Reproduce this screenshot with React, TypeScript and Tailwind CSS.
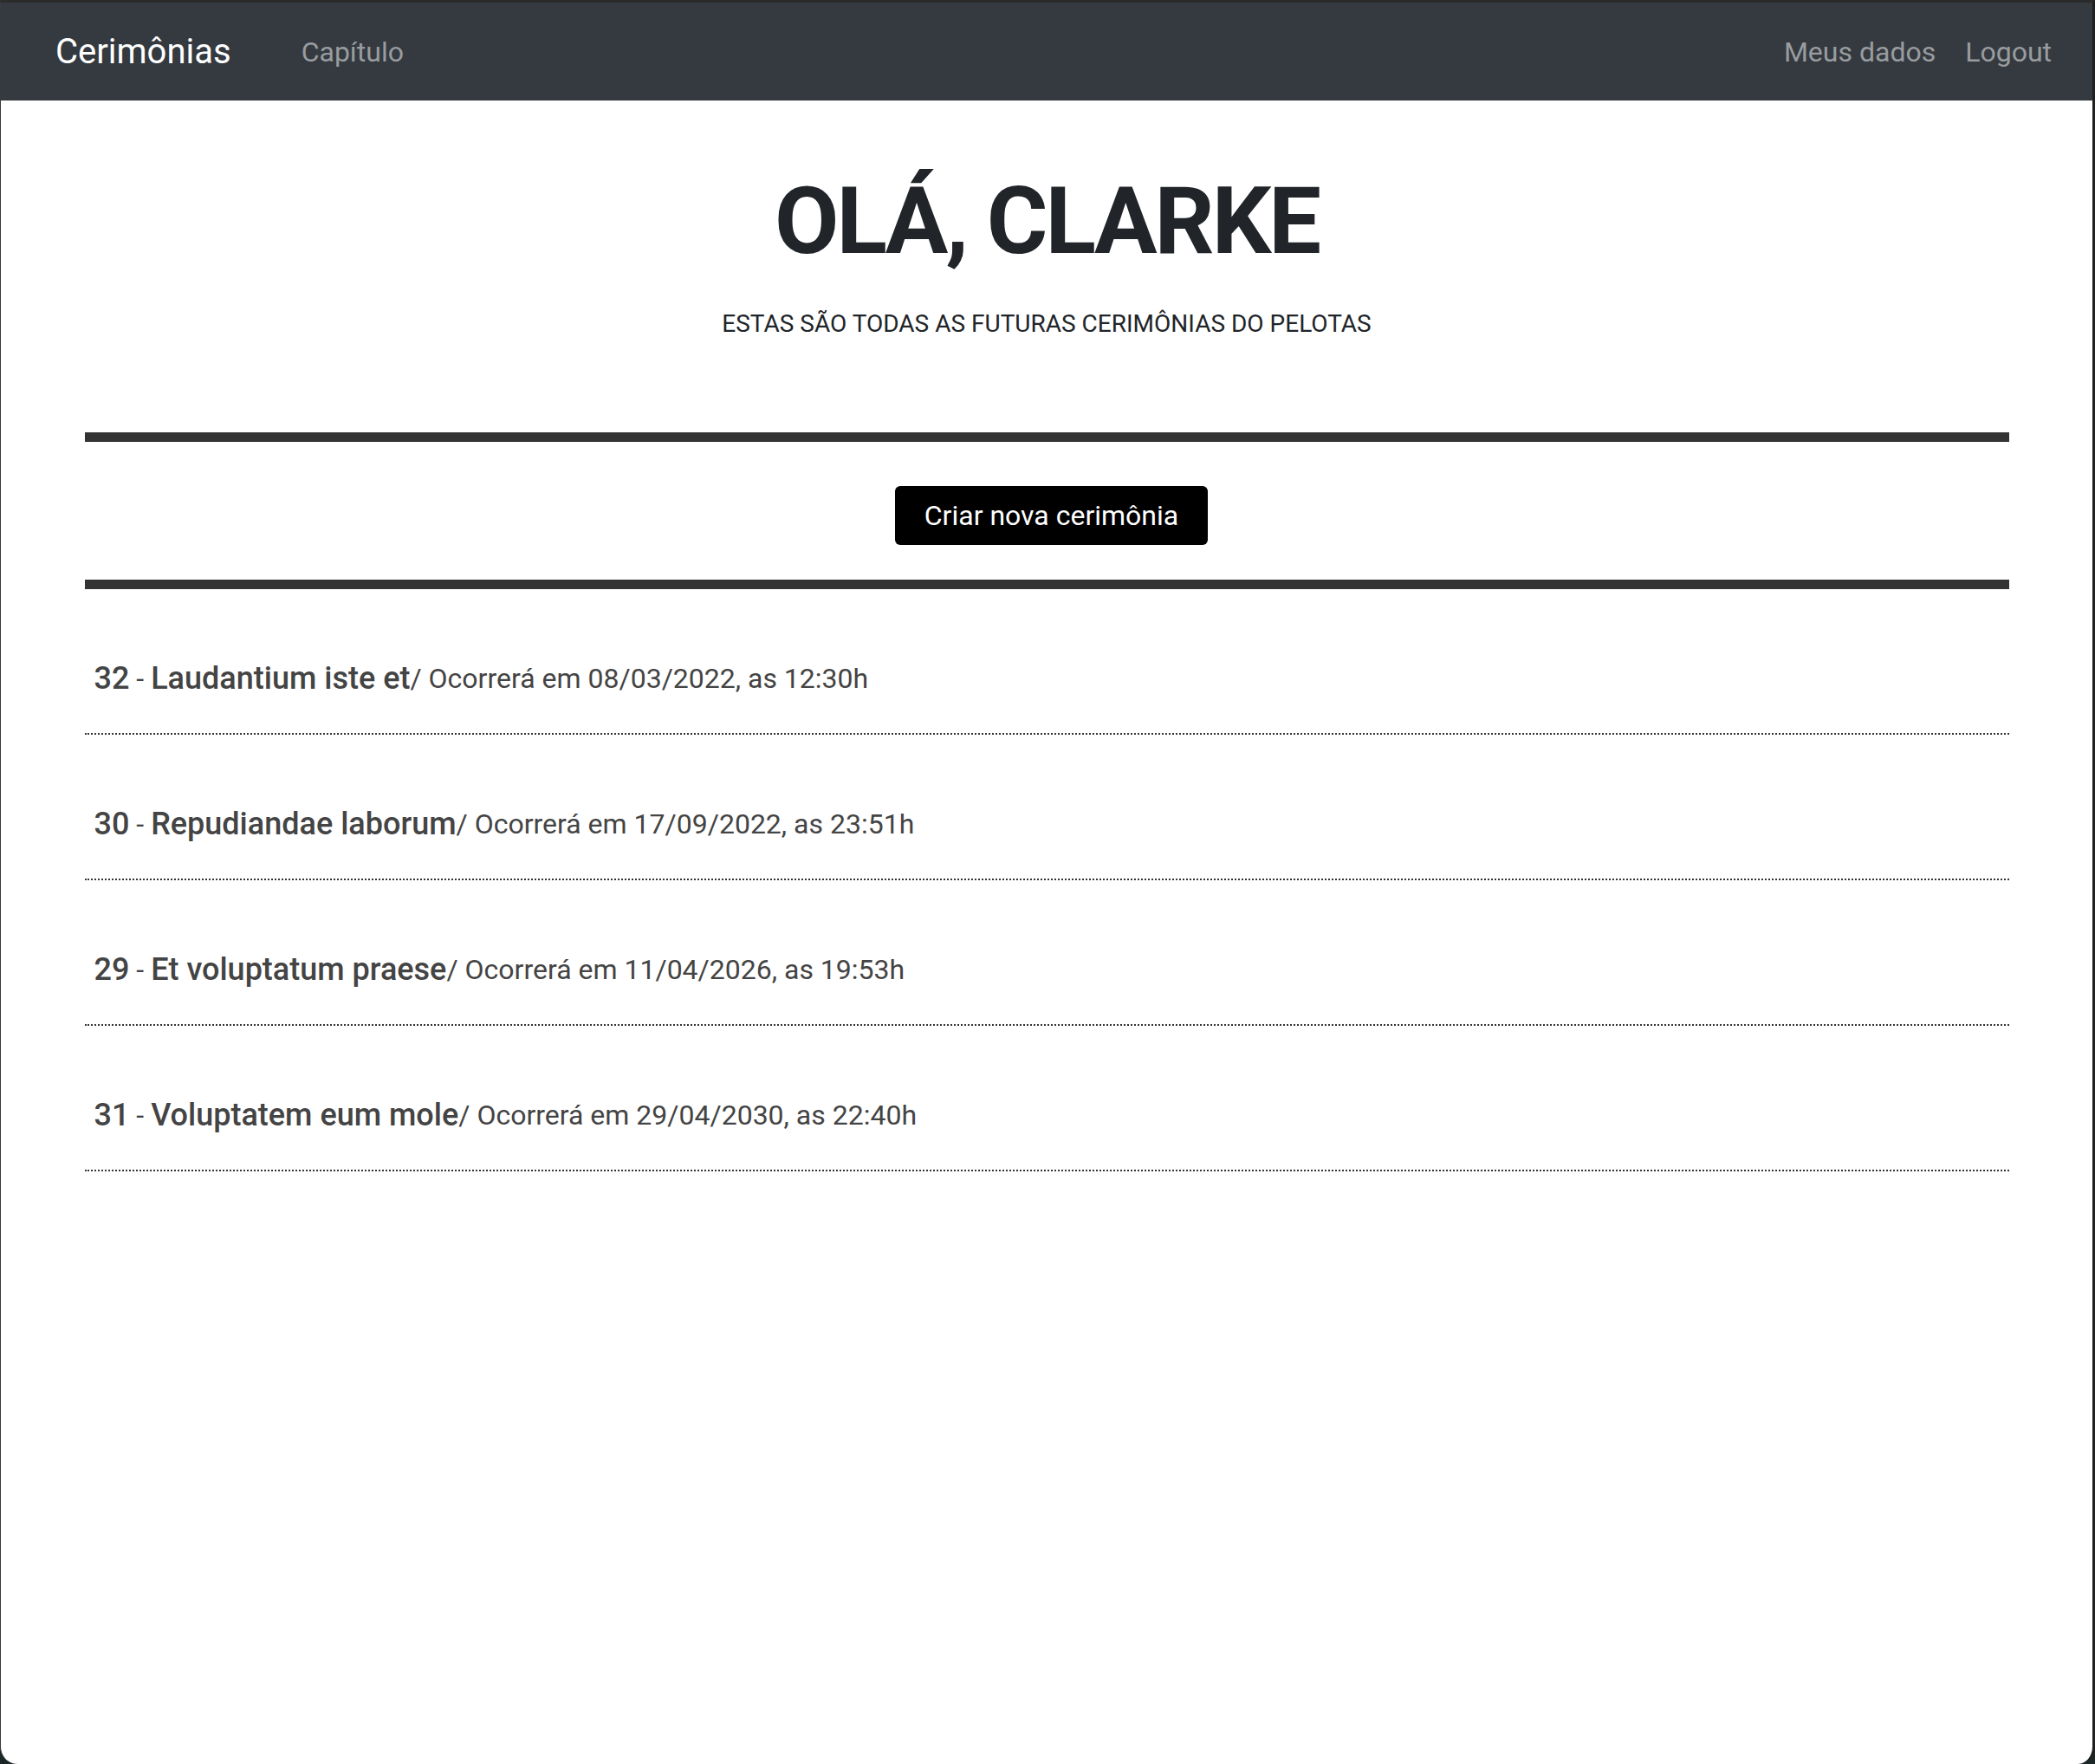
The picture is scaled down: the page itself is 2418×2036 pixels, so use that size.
const cerimonias = [
  { id: 32, nome: 'Laudantium iste et', data: '08/03/2022', hora: '12:30h' },
  { id: 30, nome: 'Repudiandae laborum', data: '17/09/2022', hora: '23:51h' },
  { id: 29, nome: 'Et voluptatum praese', data: '11/04/2026', hora: '19:53h' },
  { id: 31, nome: 'Voluptatem eum mole', data: '29/04/2030', hora: '22:40h' },
];

function Navbar() {
  return (
    <nav className="h-[113px] bg-[#343a40] flex items-center justify-between pl-[63px] pr-[47px]">
      <div className="flex items-center">
        <a className="text-[40px] text-white leading-none">Cerimônias</a>
        <a className="ml-[81px] text-[32px] text-[#999c9f] leading-none">Capítulo</a>
      </div>
      <div className="flex items-center gap-[34px] text-[32px] text-[#999c9f] leading-none">
        <a>Meus dados</a>
        <a>Logout</a>
      </div>
    </nav>
  );
}

export default function App() {
  return (
    <div className="w-[2418px] h-[2036px] bg-[#1b2626] overflow-hidden" style={{ fontFamily: 'Roboto, "Liberation Sans", sans-serif' }}>
      <div className="h-full bg-white rounded-b-[20px] overflow-hidden border-t-[3px] border-t-[#2b2b2b] border-r-[3px] border-r-[#1f1f1f] border-l border-l-[#3a3a3a]">
        <Navbar />

        <main className="w-[2221px] mx-auto">
          <header className="text-center text-[#212529]">
            <h1 className="mt-[75px] text-[108px] font-bold leading-[1.2] tracking-[-3px]">OLÁ, CLARKE</h1>
            <p className="mt-[32px] text-[28px] leading-[1.5]">ESTAS SÃO TODAS AS FUTURAS CERIMÔNIAS DO PELOTAS</p>
          </header>

          <div className="mt-[104px] h-[11px] bg-[#333333]" />
          <div className="flex justify-center pt-[51px] pb-[40px]">
            <button className="ml-[11px] h-[68px] px-[34px] bg-black text-white text-[32px] rounded-[6px]">Criar nova cerimônia</button>
          </div>
          <div className="h-[11px] bg-[#333333]" />

          <ul>
            {cerimonias.map((c) => (
              <li key={c.id} className="pt-[82px] pb-[41px] px-[11px] border-b-2 border-dotted border-[#333333] text-[#444444]">
                <div className="h-[43px] flex items-center whitespace-pre">
                  <span className="text-[36px] font-medium">{c.id}</span>
                  <span className="text-[32px]"> - </span>
                  <span className="text-[36px] font-medium">{c.nome}</span>
                  <span className="text-[32px]">/ Ocorrerá em {c.data}, as {c.hora}</span>
                </div>
              </li>
            ))}
          </ul>
        </main>
      </div>
    </div>
  );
}
